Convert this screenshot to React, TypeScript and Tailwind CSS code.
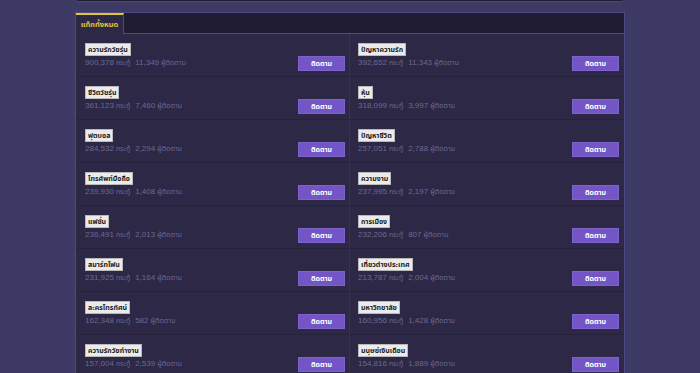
import React from "react";

type Tag = { name: string; posts: string; followers: string };

const tags: Tag[] = [
  { name: "ความรักวัยรุ่น", posts: "900,378", followers: "11,349" },
  { name: "ปัญหาความรัก", posts: "392,652", followers: "11,343" },
  { name: "ชีวิตวัยรุ่น", posts: "361,123", followers: "7,460" },
  { name: "หุ้น", posts: "318,099", followers: "3,997" },
  { name: "ฟุตบอล", posts: "284,532", followers: "2,294" },
  { name: "ปัญหาชีวิต", posts: "257,051", followers: "2,788" },
  { name: "โทรศัพท์มือถือ", posts: "239,930", followers: "1,408" },
  { name: "ความงาม", posts: "237,995", followers: "2,197" },
  { name: "แฟชั่น", posts: "236,491", followers: "2,013" },
  { name: "การเมือง", posts: "232,206", followers: "807" },
  { name: "สมาร์ทโฟน", posts: "231,925", followers: "1,164" },
  { name: "เที่ยวต่างประเทศ", posts: "213,787", followers: "2,004" },
  { name: "ละครโทรทัศน์", posts: "162,348", followers: "582" },
  { name: "มหาวิทยาลัย", posts: "160,956", followers: "1,428" },
  { name: "ความรักวัยทำงาน", posts: "157,004", followers: "2,539" },
  { name: "มนุษย์เงินเดือน", posts: "154,816", followers: "1,889" },
];

function Cell({ tag, left }: { tag: Tag; left: boolean }) {
  return (
    <div
      className={
        left
          ? "h-[43px] border-b border-[#27233f] border-r border-r-[#36325a] pl-[9px] pr-[4px] pt-[9px] flex flex-col"
          : "h-[43px] border-b border-[#27233f] pl-[8px] pr-[5px] pt-[9px] flex flex-col"
      }
    >
      <div className="flex">
        <span className="h-[13px] px-[2px] flex items-center bg-[#ebebeb] border border-[#b9b9b9] text-[#1c1c1c] text-[7px] font-bold leading-none">
          {tag.name}
        </span>
      </div>
      <div className="flex items-start justify-between">
        <div className="h-[11px] mt-[1px] flex items-center text-[8px] leading-none text-[#6d6993] whitespace-nowrap">
          <span>{tag.posts}</span>
          <span className="ml-[2px] text-[7px]">กระทู้</span>
          <span className="ml-[5px]">{tag.followers}</span>
          <span className="ml-[2px] text-[7px]">ผู้ติดตาม</span>
        </div>
        <button className="w-[47px] h-[15px] bg-[#7455c5] border border-[#7e62cc] text-white text-[7px] font-bold leading-none flex items-center justify-center">
          ติดตาม
        </button>
      </div>
    </div>
  );
}

export default function App() {
  return (
    <div
      className="w-[700px] h-[373px] overflow-hidden bg-[#3e3a66]"
      style={{ fontFamily: '"Liberation Sans", "Noto Sans Thai", Tahoma, "Noto Sans", sans-serif' }}
    >
      <div className="ml-[77px] w-[546px] h-[2px] bg-[#1f1c33] border-b border-[#4a4680]" />
      <div className="ml-[75px] mt-[10px] w-[550px] border border-[#4d4985] bg-[#2c2846]">
        <div className="h-[21px] flex bg-[#1f1c33] border-b border-[#4d4985]">
          <div className="w-[48px] h-[21px] bg-[#2c2846] border-t-2 border-[#e3c53a] border-r border-r-[#4d4985] flex items-center justify-center text-[#e3c53a] text-[7.5px] font-bold">
            แท็กทั้งหมด
          </div>
        </div>
        <div className="grid grid-cols-2">
          {tags.map((t, i) => (
            <Cell key={i} tag={t} left={i % 2 === 0} />
          ))}
        </div>
      </div>
    </div>
  );
}
